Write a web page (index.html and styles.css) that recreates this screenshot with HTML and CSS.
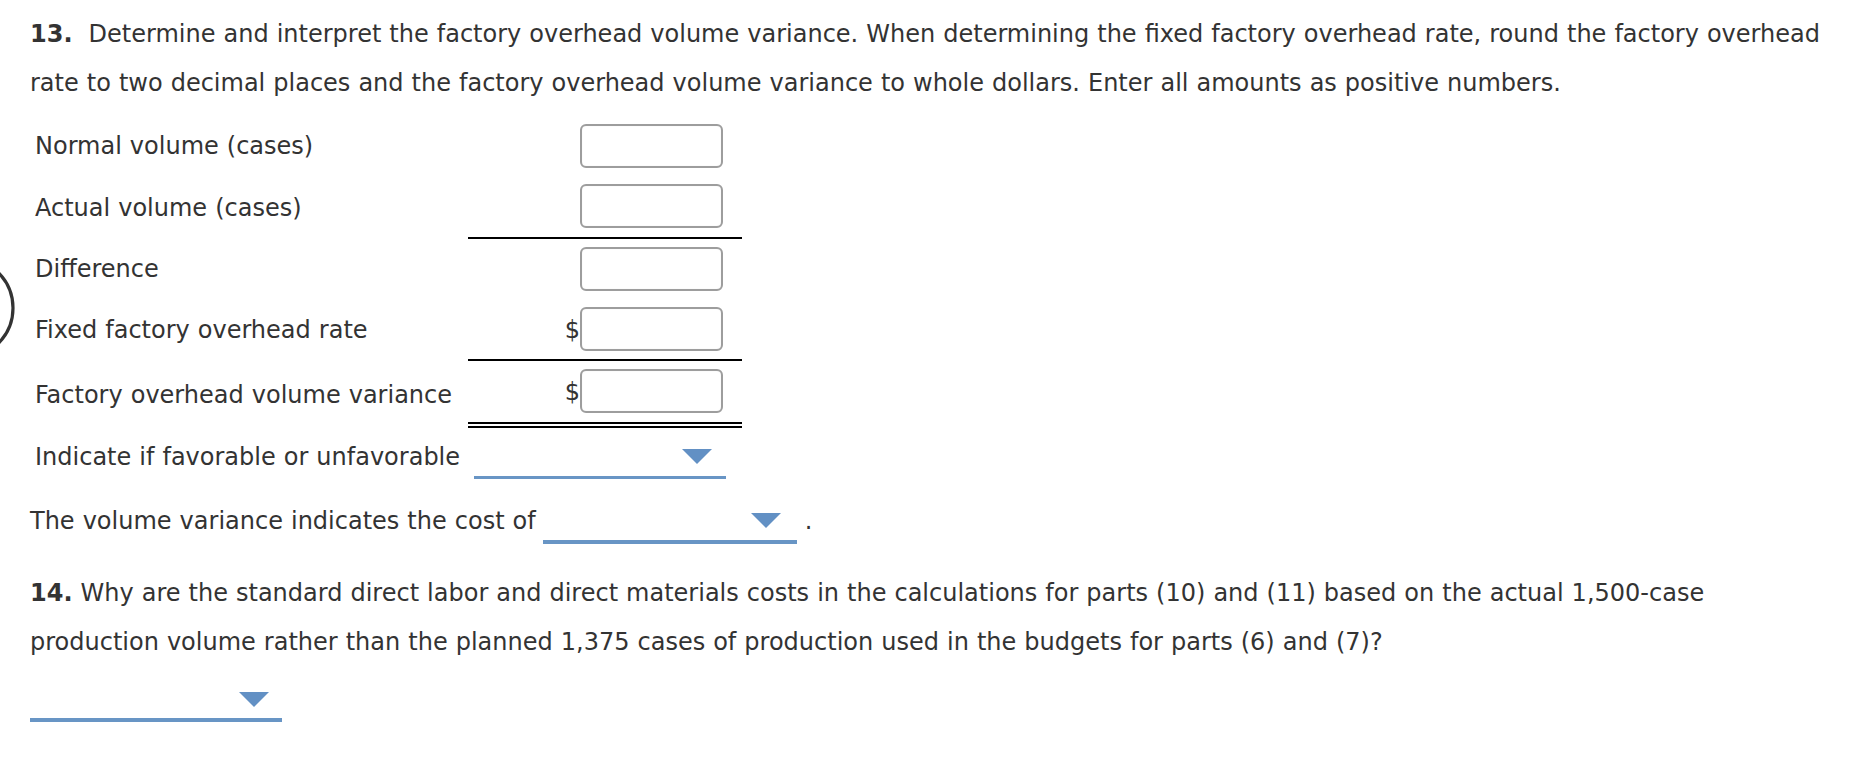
FILE: index.html
```html
<!DOCTYPE html>
<html>
<head>
<meta charset="utf-8">
<link rel="stylesheet" href="styles.css">
</head>
<body>
<div class="page">
  <p class="q"><b class="num">13.</b> Determine and interpret the factory overhead volume variance. When determining the fixed factory overhead rate, round the factory overhead rate to two decimal places and the factory overhead volume variance to whole dollars. Enter all amounts as positive numbers.</p>

  <div class="tbl">
    <div class="row r1">
      <div class="lbl">Normal volume (cases)</div>
      <div class="val"><span class="box"></span></div>
    </div>
    <div class="row r2">
      <div class="lbl">Actual volume (cases)</div>
      <div class="val single"><span class="box"></span></div>
    </div>
    <div class="row r3">
      <div class="lbl">Difference</div>
      <div class="val"><span class="box"></span></div>
    </div>
    <div class="row r4">
      <div class="lbl">Fixed factory overhead rate</div>
      <div class="val single"><span class="cur">$</span><span class="box"></span></div>
    </div>
    <div class="row r5">
      <div class="lbl">Factory overhead volume variance</div>
      <div class="val double"><span class="cur">$</span><span class="box"></span></div>
    </div>
    <div class="row r6">
      <div class="lbl">Indicate if favorable or unfavorable</div>
      <div class="ddcell"><span class="dd dd-fav"><span class="arrow"></span></span></div>
    </div>
  </div>

  <div class="sentence">
    <span class="stext">The volume variance indicates the cost of</span>
    <span class="dd dd-cost"><span class="arrow"></span></span>
    <span class="dot">.</span>
  </div>

  <p class="q q14"><b>14.</b> Why are the standard direct labor and direct materials costs in the calculations for parts (10) and (11) based on the actual 1,500-case production volume rather than the planned 1,375 cases of production used in the budgets for parts (6) and (7)?</p>

  <div class="ans"><span class="dd dd-why"><span class="arrow"></span></span></div>

  <svg class="ring" width="20" height="110" viewBox="0 0 20 110" aria-hidden="true">
    <circle cx="-37" cy="58" r="50" fill="none" stroke="#333" stroke-width="3.2"/>
  </svg>
</div>
</body>
</html>
```

FILE: styles.css
```css
html, body {
  margin: 0;
  padding: 0;
  background: #fff;
}

body {
  font-family: "DejaVu Sans", Verdana, sans-serif;
  font-size: 24px;
  color: #333;
  word-spacing: 0.4px;
}

.page {
  position: relative;
  padding: 10px 0 0 30px;
  width: 1800px;
}

.q {
  margin: 0;
  line-height: 49px;
  width: 1800px;
}

.num {
  margin-right: 8px;
}

.tbl {
  margin-top: 8px;
  margin-left: 5px;
}

.row {
  display: flex;
}

.lbl {
  width: 433px;
  flex: none;
  display: flex;
  align-items: center;
  line-height: 30px;
}

.val {
  width: 274px;
  flex: none;
  display: flex;
  justify-content: flex-end;
  align-items: center;
  padding: 8px 19px 8px 0;
  box-sizing: border-box;
}

.r2 .val { padding-bottom: 9px; }
.r4 .val { padding-bottom: 8px; }
.r5 .val { padding-bottom: 9px; }

.val.single {
  border-bottom: 2px solid #000;
}

.val.double {
  border-bottom: 6px double #000;
}

.box {
  display: block;
  width: 143px;
  height: 44px;
  box-sizing: border-box;
  border: 2px solid #9d9d9d;
  border-radius: 6px;
  background: #fff;
  box-shadow: inset 0 0 1px rgba(0, 0, 0, 0.15);
}

.cur {
  line-height: 30px;
  position: relative;
  top: 1px;
}

.r6 {
  padding-top: 14px;
  align-items: flex-start;
}

.r6 .lbl {
  display: block;
}

.ddcell {
  padding-left: 6px;
  padding-top: 7px;
}

.dd {
  display: flex;
  justify-content: flex-end;
  align-items: flex-start;
  width: 252px;
  height: 30px;
  box-sizing: border-box;
  padding-right: 14px;
  border-bottom: 3px solid #6895c5;
}

.arrow {
  display: block;
  width: 0;
  height: 0;
  border-left: 15px solid transparent;
  border-right: 15px solid transparent;
  border-top: 15px solid #6290c4;
}

.sentence {
  display: flex;
  align-items: flex-start;
  margin-top: 27px;
  line-height: 30px;
}

.dd-cost {
  margin-left: 7px;
  margin-top: 7px;
  width: 254px;
  padding-right: 16px;
  border-bottom-width: 4px;
  height: 31px;
}

.dot {
  margin-left: 8px;
}

.q14 {
  margin-top: 25px;
}

.ans {
  margin-top: 25px;
}

.dd-why {
  width: 252px;
  padding-right: 13px;
  border-bottom-width: 4px;
}

.ring {
  position: absolute;
  left: 0;
  top: 250px;
}
```
